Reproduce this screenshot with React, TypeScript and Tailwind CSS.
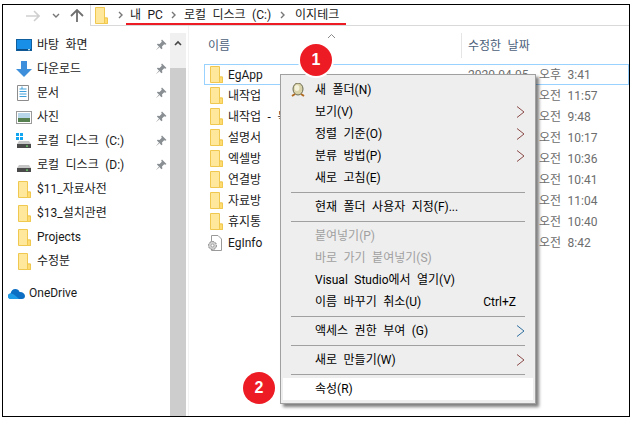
import React from "react";

const FONT = "[font-family:'Roboto','Noto_Sans_CJK_KR',sans-serif] [word-spacing:3.5px]";

function Folder({ className = "" }: { className?: string }) {
  return (
    <svg width="13" height="17" viewBox="0 0 13 17" className={className}>
      <path d="M0.5 0.5H9.5V11H12.5V16.5H0.5Z" fill="#ffe79c" stroke="#f0c850" />
      <path d="M9.5 11V16.5H12.5V11Z" fill="#ffdc72" stroke="#f0c850" />
    </svg>
  );
}

function Pin() {
  return (
    <svg width="12" height="12" viewBox="0 0 12 12">
      <path d="M7 0.5L11.5 5 10.3 5.8 9.2 5.2 7 7.6 7.4 9.6 6.4 10.2 1.9 5.6 2.6 4.7 4.6 5 6.8 2.8 6.2 1.6Z" fill="#8a8f94" />
      <path d="M3.6 8L0.8 11.2 4.2 8.6Z" fill="#8a8f94" />
    </svg>
  );
}

function Drive({ win }: { win?: boolean }) {
  return (
    <svg width="16" height="16" viewBox="0 0 16 16">
      {win && (
        <g fill="#12a5f0">
          <rect x="0" y="0" width="3" height="3" />
          <rect x="4" y="0" width="3" height="3" />
          <rect x="0" y="4" width="3" height="3" />
          <rect x="4" y="4" width="3" height="3" />
        </g>
      )}
      <path d="M3 8H13L15 11H1Z" fill="#c6c6c6" />
      <rect x="1" y="11" width="14" height="4" fill="#4a4a4a" />
      <rect x="10" y="12.5" width="2" height="1.2" fill="#6fdc6f" />
    </svg>
  );
}

const pinned: { label: string; icon: React.ReactNode }[] = [
  {
    label: "바탕 화면",
    icon: (
      <svg width="16" height="12" viewBox="0 0 16 12">
        <rect x="0.5" y="0.5" width="15" height="11" fill="#1a8fe8" stroke="#0f5f9e" />
        <rect x="1" y="10" width="14" height="1.4" fill="#0f4f88" />
        <rect x="12" y="10.2" width="2" height="1" fill="#dff" />
      </svg>
    ),
  },
  {
    label: "다운로드",
    icon: (
      <svg width="16" height="16" viewBox="0 0 16 16">
        <path d="M5 0H11V8H16L8 16L0 8H5Z" fill="#3d8fdc" />
      </svg>
    ),
  },
  {
    label: "문서",
    icon: (
      <svg width="14" height="16" viewBox="0 0 14 16">
        <path d="M1.5 0.5H12.5V15.5H1.5Z" fill="#fff" stroke="#8c8c8c" />
        <path d="M3.5 4H10.5M3.5 6.5H10.5M3.5 9H10.5M3.5 11.5H10.5" stroke="#3f9fd8" />
        <path d="M6 1.5V4" stroke="#3f9fd8" />
      </svg>
    ),
  },
  {
    label: "사진",
    icon: (
      <svg width="16" height="13" viewBox="0 0 16 13">
        <rect x="0.5" y="0.5" width="15" height="12" fill="#fff" stroke="#9a9a9a" />
        <rect x="2" y="2" width="12" height="5" fill="#b7d6ea" />
        <rect x="2" y="7" width="12" height="4" fill="#56804f" />
      </svg>
    ),
  },
  { label: "로컬 디스크 (C:)", icon: <Drive win /> },
  { label: "로컬 디스크 (D:)", icon: <Drive /> },
];

const folders = ["$11_자료사전", "$13_설치관련", "Projects", "수정분"];

const files = [
  { name: "EgApp", time: "오후 3:41", sel: true },
  { name: "내작업", time: "오전 11:57" },
  { name: "내작업 - 복사본", time: "오전 9:48" },
  { name: "설명서", time: "오전 10:17" },
  { name: "엑셀방", time: "오전 10:36" },
  { name: "연결방", time: "오전 10:41" },
  { name: "자료방", time: "오전 11:04" },
  { name: "휴지통", time: "오전 10:40" },
  { name: "EgInfo", time: "오전 8:42", file: true },
];

type Item =
  | { sep: true }
  | { label: string; sub?: boolean; off?: boolean; hot?: boolean; icon?: boolean; key2?: string; blue?: boolean };

const menu: Item[] = [
  { label: "새 폴더(N)", icon: true },
  { label: "보기(V)", sub: true },
  { label: "정렬 기준(O)", sub: true },
  { label: "분류 방법(P)", sub: true },
  { label: "새로 고침(E)" },
  { sep: true },
  { label: "현재 폴더 사용자 지정(F)..." },
  { sep: true },
  { label: "붙여넣기(P)", off: true },
  { label: "바로 가기 붙여넣기(S)", off: true },
  { label: "Visual Studio에서 열기(V)" },
  { label: "이름 바꾸기 취소(U)", key2: "Ctrl+Z" },
  { sep: true },
  { label: "액세스 권한 부여 (G)", sub: true, blue: true },
  { sep: true },
  { label: "새로 만들기(W)", sub: true },
  { sep: true },
  { label: "속성(R)", hot: true },
];

function Chevron({ blue }: { blue?: boolean }) {
  return (
    <svg width="9" height="12" viewBox="0 0 9 12" className="absolute right-[8px] top-[5px]">
      <path d="M1 0.5L8 6L1 11.5" fill="none" stroke={blue ? "#2f6f9f" : "#8a4a48"} strokeWidth="1" />
    </svg>
  );
}

function Crumb({ className }: { className: string }) {
  return (
    <svg width="6" height="8" viewBox="0 0 6 8" className={className}>
      <path d="M1 1L4 4L1 7" fill="none" stroke="#777" strokeWidth="1.4" />
    </svg>
  );
}

function Badge({ n, className }: { n: number; className: string }) {
  return (
    <div className={`absolute flex h-[32px] w-[32px] items-center justify-center rounded-full bg-[#ed1c24] text-[16px] font-bold text-white [font-family:'Liberation_Sans',sans-serif] ${className}`}>
      {n}
    </div>
  );
}

export default function App() {
  return (
    <div className={`relative h-[422px] w-[631px] overflow-hidden bg-white pl-[2px] pt-[4px] text-[12px] leading-none text-[#1a1a1a] ${FONT}`}>
      <div className="flex h-[413px] w-[628px] flex-col border border-black">
        {/* toolbar */}
        <div className="flex h-[21px] shrink-0 items-center">
          <div className="flex w-[87px] items-center pl-[23px] text-[#7a7a7a]">
            <svg width="14" height="12" viewBox="0 0 14 12"><path d="M0 6H13M8 1L13 6L8 11" fill="none" stroke="#cfcfcf" strokeWidth="1.6" /></svg>
            <svg width="8" height="6" viewBox="0 0 8 6" className="ml-[12px]"><path d="M1 1L4 4L7 1" fill="none" stroke="#777" strokeWidth="1.4" /></svg>
            <svg width="14" height="14" viewBox="0 0 14 14" className="ml-[10px]"><path d="M7 13V1M1 7L7 1L13 7" fill="none" stroke="#6f6f6f" strokeWidth="1.8" /></svg>
          </div>
          <div className="flex h-[21px] flex-1 items-center border-b border-l border-[#d9d9d9] pl-[4px]">
            <Folder />
            <Crumb className="ml-[10px]" />
            <span className="ml-[6px] whitespace-pre">내 PC</span>
            <Crumb className="ml-[8px]" />
            <span className="ml-[7px] whitespace-pre">로컬 디스크 (C:)</span>
            <Crumb className="ml-[9px]" />
            <span className="ml-[9px] whitespace-pre">이지테크</span>
          </div>
        </div>

        {/* body */}
        <div className="flex min-h-0 flex-1">
          {/* nav */}
          <div className="w-[167px] shrink-0 pt-[7px]">
            {pinned.map((p) => (
              <div key={p.label} className="flex h-[24px] items-center">
                <div className="flex w-[34px] justify-start pl-[13px]">{p.icon}</div>
                <span className="flex-1 whitespace-pre">{p.label}</span>
                <div className="mr-[3px]"><Pin /></div>
              </div>
            ))}
            {folders.map((f) => (
              <div key={f} className="flex h-[24px] items-center">
                <div className="w-[34px] pl-[15px]"><Folder /></div>
                <span>{f}</span>
              </div>
            ))}
            <div className="mt-[8px] flex h-[24px] items-center">
              <svg width="17" height="11" viewBox="0 0 17 11" className="ml-[5px]">
                <path d="M3 11C1 11 0 9.6 0 8.2C0 6.8 1 5.6 2.6 5.5C3 3 4.8 1 7.4 1C9.4 1 11 2.2 11.6 4C14.6 3.8 17 5.6 17 8C17 9.8 15.8 11 14 11Z" fill="#0c6fc4" />
                <path d="M0 8.2C0 6.8 1 5.6 2.6 5.5C5 5 8 8 11 11H3C1 11 0 9.6 0 8.2Z" fill="#1d9be6" />
              </svg>
              <span className="ml-[4px]">OneDrive</span>
            </div>
          </div>

          {/* scrollbar */}
          <div className="flex w-[16px] shrink-0 flex-col pt-[7px]">
            <div className="flex h-[35px] items-start justify-center bg-[#f0f0f0] pt-[7px]">
              <svg width="8" height="6" viewBox="0 0 8 6"><path d="M1 5L4 2L7 5" fill="none" stroke="#444" strokeWidth="1.6" /></svg>
            </div>
            <div className="flex-1 bg-[#cdcdcd]" />
          </div>

          {/* list */}
          <div className="ml-[2px] flex-1 border-l border-[#f2f2f2] pt-[7px] text-[#1a1a1a]">
            <div className="relative flex h-[25px] items-center pl-[19px] text-[#4c607a]">
              <span className="w-[253px]">이름</span>
              <div className="flex h-[25px] items-center border-l border-[#e5e5e5] pl-[6px]">수정한 날짜</div>
            </div>
            <div className="ml-[15px] mt-[6px]">
              {files.map((f) => (
                <div key={f.name} className={`flex h-[21px] items-center border ${f.sel ? "border-[#99d1ff]" : "border-transparent"} pl-[5px]`}>
                  <div className="w-[18px]">
                    {f.file ? (
                      <svg width="15" height="16" viewBox="0 0 15 16" className="-ml-[3px]">
                        <path d="M4.5 0.5H11L14.5 4V15.5H4.5Z" fill="#fff" stroke="#9a9a9a" />
                        <circle cx="5.5" cy="10.5" r="4" fill="#cfcfcf" stroke="#808080" strokeDasharray="2 1" />
                        <circle cx="5.5" cy="10.5" r="1.4" fill="#fff" stroke="#808080" strokeWidth="0.6" />
                      </svg>
                    ) : (
                      <Folder />
                    )}
                  </div>
                  <span className="w-[240px] whitespace-pre">{f.name}</span>
                  <span className="w-[71px] whitespace-pre text-[#6d6d6d]">2020-04-05</span>
                  <span className="whitespace-pre text-[#6d6d6d]">{f.time}</span>
                </div>
              ))}
            </div>
          </div>
        </div>
      </div>

      {/* red underline */}
      <div className="absolute left-[126px] top-[23px] h-[2px] w-[220px] bg-[#ed1c24]" />

      {/* sort caret */}
      <svg width="9" height="6" viewBox="0 0 9 6" className="absolute left-[327px] top-[33px]">
        <path d="M1 5L4.5 1.5L8 5" fill="none" stroke="#8a8a8a" />
      </svg>

      {/* context menu */}
      <div className="absolute left-[280px] top-[74px] w-[256px] border border-[#a0a0a0] bg-[#eeeeee] px-[2px] pb-[3px] pt-[4px] text-black shadow-[3px_3px_3px_rgba(0,0,0,0.5)]">
        {menu.map((m, i) =>
          "sep" in m ? (
            <div key={i} className="flex h-[7px] items-center pl-[8px] pr-[8px]">
              <div className="h-px w-full bg-[#a0a0a0]" />
            </div>
          ) : (
            <div key={i} className={`relative flex h-[22px] items-center whitespace-pre pl-[32px] ${m.off ? "text-[#a0a0a0]" : ""} ${m.hot ? "bg-white" : ""}`}>
              {m.icon && (
                <svg width="14" height="14" viewBox="0 0 14 14" className="absolute left-[8px] top-[4px]">
                  <ellipse cx="7" cy="6" rx="5" ry="6" fill="#d9d2a8" stroke="#6b6b50" />
                  <ellipse cx="6" cy="5" rx="2.4" ry="3" fill="#f5f2dc" />
                  <path d="M1 13L4 11M13 13L10 11" stroke="#b06a20" strokeWidth="2" />
                </svg>
              )}
              {m.label}
              {m.key2 && <span className="absolute right-[17px]">{m.key2}</span>}
              {m.sub && <Chevron blue={m.blue} />}
            </div>
          )
        )}
      </div>

      <Badge n={1} className="left-[300px] top-[44px] ring-2 ring-white" />
      <Badge n={2} className="left-[243px] top-[372px]" />
    </div>
  );
}
